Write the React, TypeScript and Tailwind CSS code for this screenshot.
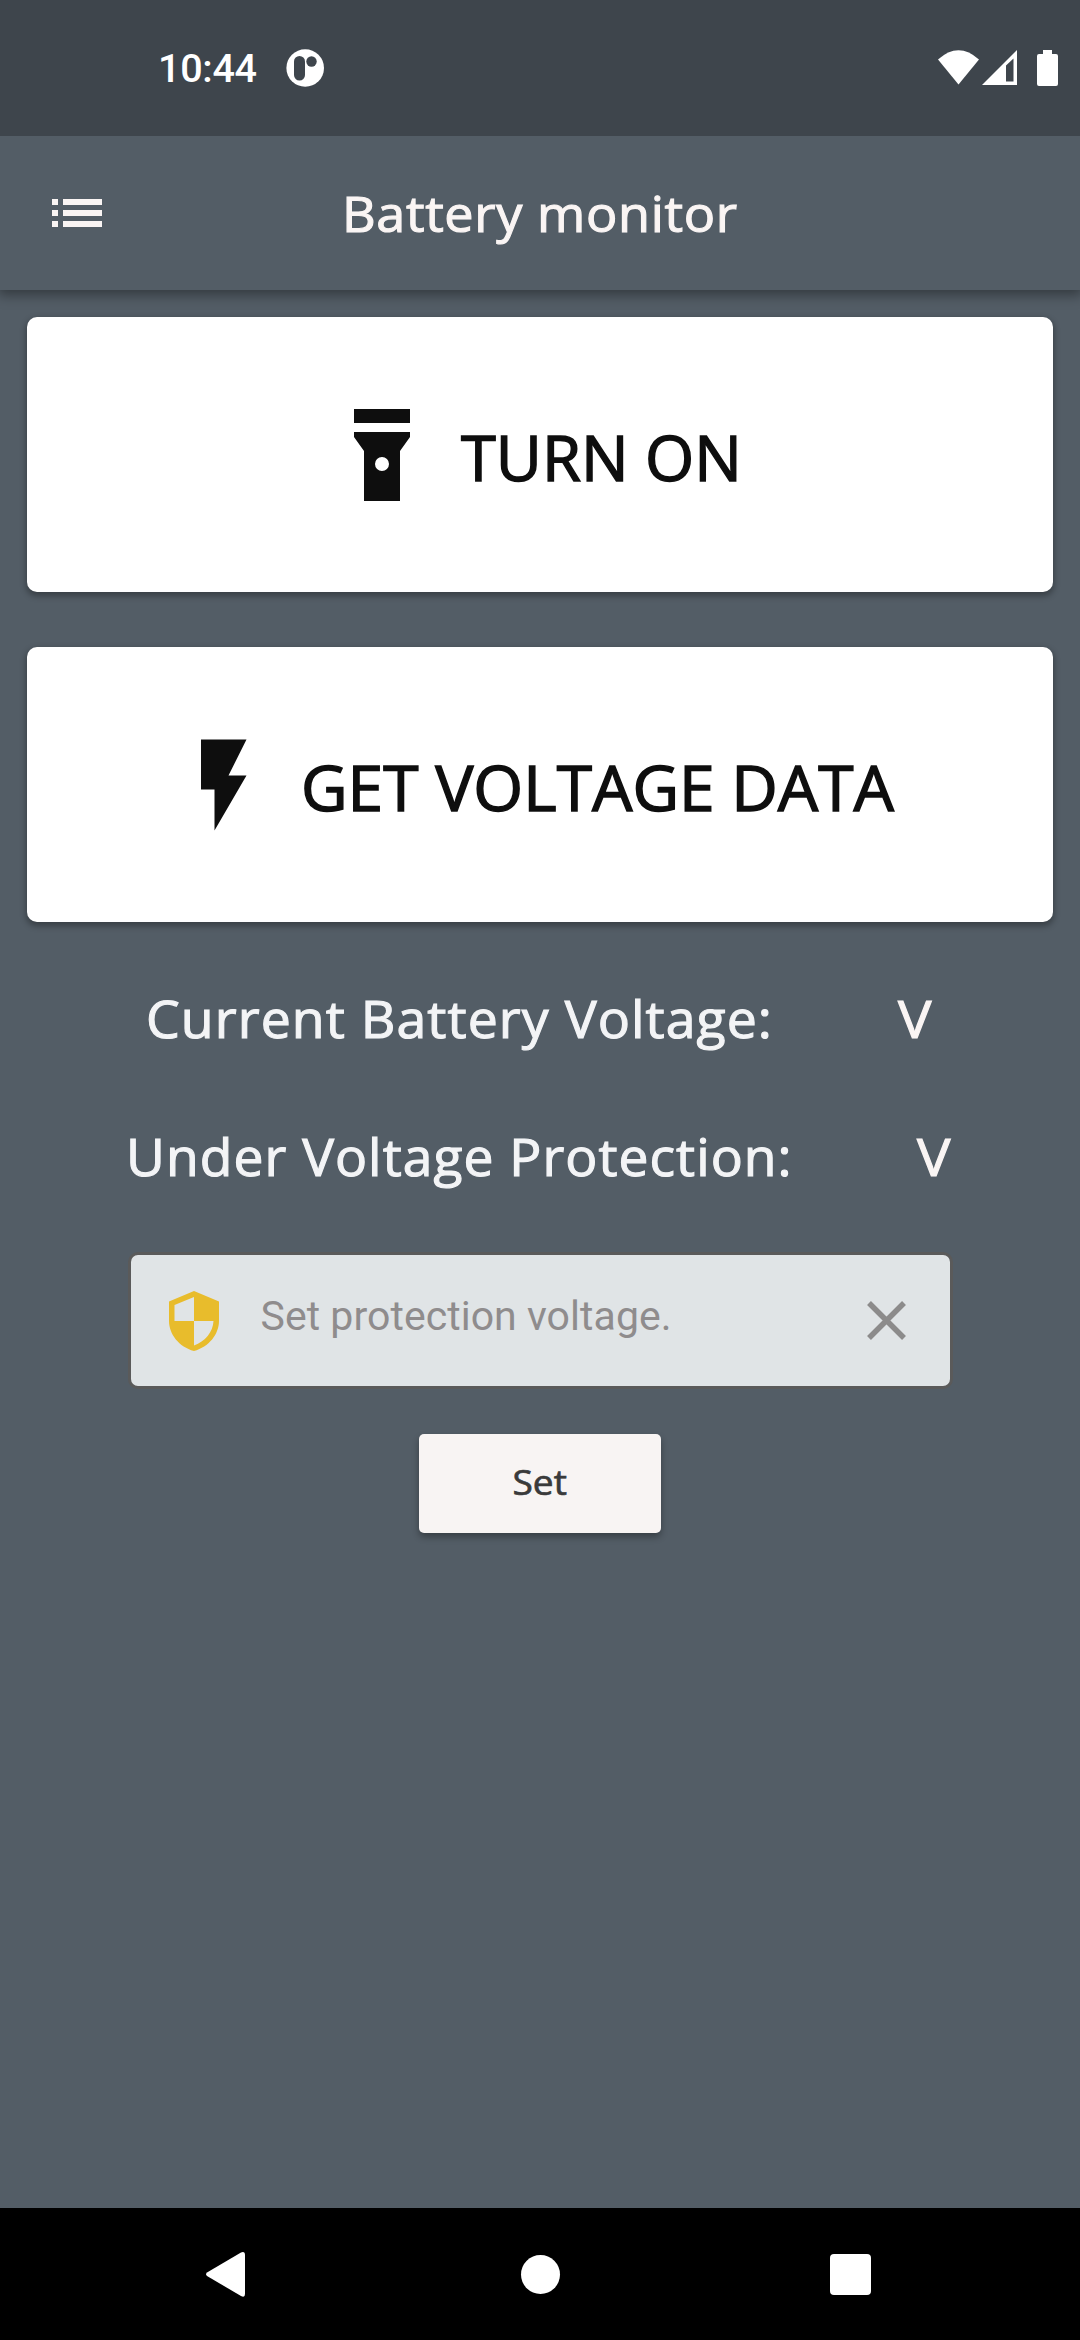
import type { ReactNode } from "react";

const display = "font-['Open_Sans','Noto_Sans',sans-serif] font-medium whitespace-nowrap";

function StatusBar() {
  return (
    <div className="flex h-[136px] items-start bg-[#3e454c] text-white">
      <span className="ml-[158px] mt-[49px] w-[128px] font-[Roboto,sans-serif] text-[39.5px] leading-[40px] font-medium tracking-[-0.3px]">10:44</span>
      <svg className="mt-[49px] h-[38px] w-[38px]" viewBox="0 0 38 38">
        <circle cx="19.2" cy="19" r="18.8" fill="currentColor" />
        <rect x="8" y="7" width="11" height="24.5" rx="5.5" fill="#3e454c" />
        <circle cx="25.5" cy="12.5" r="5.2" fill="#3e454c" />
      </svg>
      <svg className="ml-auto mr-[21px] mt-[49px] h-[38px] w-[122px]" viewBox="937 49 122 38" fill="currentColor">
        <path d="M938 59.5Q958.500 41 979 59.500L958.500 84.500Z" />
        <path fillRule="evenodd" d="M982 85L1017 50V85ZM1006 65.500V81.500H1013.500V58.500Z" />
        <path d="M1043 50h9v4h4q2 0 2 2v28q0 2-2 2h-17q-2 0-2-2v-28q0-2 2-2h4z" />
      </svg>
    </div>
  );
}

function AppBar() {
  return (
    <header className="relative z-10 flex h-[154px] items-center bg-[#535d66] text-[#faf5f4] shadow-[0_3px_12px_2px_rgba(0,0,0,0.38)] [clip-path:inset(0_0_-20px_0)]">
      <svg className="ml-[52px] h-[28px] w-[50px]" viewBox="0 0 50 28" fill="currentColor">
        <path d="M0 0h6v6H0zM11 0h39v6H11zM0 11h6v6H0zM11 11h39v6H11zM0 22h6v6H0zM11 22h39v6H11z" />
      </svg>
      <h1 className={`${display} ml-[240px] origin-left scale-x-[1.043] text-[50px] leading-[60px] tracking-[0.6px] [-webkit-text-stroke:1.1px]`}>Battery monitor</h1>
    </header>
  );
}

function ActionCard({ pad, gap, icon, children }: { pad: string; gap: string; icon: ReactNode; children: ReactNode }) {
  return (
    <button className={`flex h-[275px] w-full items-center rounded-[10px] bg-white text-[#0e0e0e] shadow-[0_3px_6px_1px_rgba(0,0,0,0.32)] ${pad} ${gap}`}>
      {icon}
      {children}
    </button>
  );
}

function Reading({ row, label, labelSize }: { row: string; label: string; labelSize: string }) {
  return (
    <div className={`${display} flex items-center text-[51px] text-[#f3f4f6] [-webkit-text-stroke:1.1px] ${row}`}>
      <span className={`origin-left tracking-[1px] ${labelSize}`}>{label}</span>
      <span className="origin-left scale-x-[1.1] text-[#faf5f4]">V</span>
    </div>
  );
}

export default function App() {
  return (
    <div className="flex h-[2340px] w-[1080px] flex-col overflow-hidden bg-[#535d66]">
      <StatusBar />
      <AppBar />
      <main className="flex flex-1 flex-col">
        <div className="flex flex-col gap-[55px] px-[27px] pt-[27px]">
          <ActionCard
            pad="pl-[327px]"
            gap="gap-[51px]"
            icon={
              <svg className="h-[92px] w-[56px] shrink-0" viewBox="0 0 56 92" fill="currentColor">
                <path fillRule="evenodd" d="M0 0h56v14H0zM0 23h56v5L46 42v50H10V42L0 28zM28 48a7 7 0 1 0 0 14a7 7 0 1 0 0-14z" />
              </svg>
            }
          >
            <span className={`${display} mt-[5px] origin-left scale-x-[1.028] text-[61.5px] leading-[80px] [-webkit-text-stroke:1.4px]`}>TURN ON</span>
          </ActionCard>
          <ActionCard
            pad="pl-[174px]"
            gap="gap-[54px]"
            icon={
              <svg className="h-[92px] w-[46px] shrink-0" viewBox="0 0 46 92" fill="currentColor">
                <path d="M0 .5H45.500L27.500 36.500H45.500L13.500 91.500V50.500H0Z" />
              </svg>
            }
          >
            <span className={`${display} mt-[5px] origin-left scale-x-[1.042] text-[61.5px] leading-[80px] [-webkit-text-stroke:1.4px]`}>GET VOLTAGE DATA</span>
          </ActionCard>
        </div>

        <Reading row="mt-[28px] h-[137px] pl-[146px]" label="Current Battery Voltage:" labelSize="w-[752px] scale-x-[1.051]" />
        <Reading row="h-[138px] pl-[126px]" label="Under Voltage Protection:" labelSize="w-[791px] scale-x-[1.046]" />

        <div className="mx-auto mt-[27px] flex h-[137px] w-[825px] items-center rounded-[10px] border-[3px] border-[#5a5a5a] bg-[#e0e4e6]">
          <svg className="ml-[38px] h-[60px] w-[50px]" viewBox="0 0 50 60" fill="#e8bc2c">
            <path fillRule="evenodd" d="M25 0L50 10.500V30C50 43 40 56 25 60C10 56 0 43 0 30V10.500ZM25 6L5.500 14V30H25ZM25 30V54.500C36 50.500 44 41 44.500 30Z" />
          </svg>
          <span className="mb-[10px] ml-[42px] w-[606px] font-[Roboto,sans-serif] text-[41px] leading-[48px] tracking-[0.05px] text-[#8f8c8d]">Set protection voltage.</span>
          <svg className="h-[39px] w-[39px]" viewBox="0 0 39 39" stroke="#8c8b8b" strokeWidth="5.500">
            <path d="M2 2L37 37M37 2L2 37" />
          </svg>
        </div>

        <button className={`${display} mx-auto mt-[45px] flex h-[99px] w-[242px] items-center justify-center rounded-[5px] bg-[#f8f4f3] pb-[2px] text-[35px] text-[#3a3a3a] shadow-[0_4px_7px_rgba(0,0,0,0.32)]`}>
          <span className="scale-x-[1.06] [-webkit-text-stroke:0.7px]">Set</span>
        </button>
      </main>

      <nav className="flex h-[132px] shrink-0 bg-black text-white">
        <svg className="ml-[205px] mt-[43px] h-[47px] w-[41px]" viewBox="0 0 41 47" fill="currentColor">
          <path d="M36 1.500Q40 0 40 4V43Q40 47 36 45L2 25Q0 23.300 2 21.500Z" />
        </svg>
        <span className="ml-[275px] mt-[47px] h-[39px] w-[39px] rounded-full bg-white" />
        <span className="ml-[270px] mt-[46px] h-[41px] w-[41px] rounded-[4px] bg-white" />
      </nav>
    </div>
  );
}
